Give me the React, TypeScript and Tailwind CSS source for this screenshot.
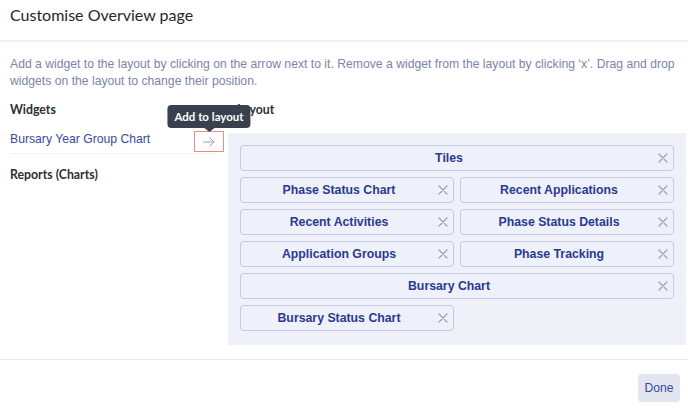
import React from "react";

const X = () => (
  <svg width="10" height="10" viewBox="0 0 10 10" className="absolute right-[5px] top-1/2 -translate-y-1/2">
    <path d="M1 1L9 9M9 1L1 9" stroke="#9aa0b4" strokeWidth="1.2" strokeLinecap="round" />
  </svg>
);

const Box = ({ label, full }: { label: string; full?: boolean }) => (
  <div
    className={`relative h-[26px] rounded-[4px] border border-[#c3c9e6] bg-[#eef1f9] flex items-center justify-center pl-[4px] pr-[20px] text-[12.3px] font-bold text-[#2b3990] ${full ? "col-span-2" : ""}`}
    style={{ fontFamily: '"Liberation Sans", Arial, sans-serif' }}
  >
    {label}
    <X />
  </div>
);

export default function App() {
  const sans = { fontFamily: 'Lato, "Noto Sans", sans-serif' };
  const arial = { fontFamily: '"Liberation Sans", Arial, sans-serif' };
  return (
    <div className="w-[688px] h-[414px] bg-white overflow-hidden flex flex-col">
      <div className="h-[42px] border-b-2 border-[#eef0f4] px-[10px] pt-[5px]">
        <div className="text-[16px] leading-[20px] text-[#23272e]" style={sans}>
          Customise Overview page
        </div>
      </div>
      <div className="px-[10px] pt-[14px]">
        <p className="text-[12.2px] leading-[17px] text-[#7c84a8] pr-[2px]" style={arial}>
          Add a widget to the layout by clicking on the arrow next to it. Remove a widget from the layout by clicking ‘x’. Drag and drop widgets on the layout to change their position.
        </p>
        <div className="flex mt-[10px]">
          <div className="w-[206px] shrink-0">
            <div className="text-[12.3px] leading-[20px] font-bold text-[#2b2f36]" style={sans}>
              Widgets
            </div>
            <div className="relative mt-[5px] h-[29px] border-b border-[#eef0f4] flex items-start justify-between">
              <span className="text-[12.2px] leading-[20px] mt-[4px] text-[#3a4a9e]" style={arial}>
                Bursary Year Group Chart
              </span>
              <div className="relative -mr-[8px] mt-[6px] w-[30px] h-[21px] border border-[#f08a8a] flex items-center justify-center">
                <svg width="12" height="10" viewBox="0 0 12 10">
                  <path d="M0.5 5H11M7 1L11 5L7 9" fill="none" stroke="#9aa0b4" strokeWidth="1" strokeLinecap="round" strokeLinejoin="round" />
                </svg>
                <div className="absolute left-1/2 -translate-x-1/2 bottom-full z-10 flex flex-col items-center">
                  <div className="bg-[#3a414e] rounded-[4px] px-[7px] h-[23px] flex items-center whitespace-nowrap text-white text-[11.5px] font-bold" style={sans}>
                    Add to layout
                  </div>
                  <div className="w-0 h-0 border-l-[5px] border-r-[5px] border-t-[4px] border-l-transparent border-r-transparent border-t-[#3a414e]" />
                </div>
              </div>
            </div>
            <div className="mt-[11px] text-[12.3px] leading-[20px] font-bold text-[#2b2f36]" style={sans}>
              Reports (Charts)
            </div>
          </div>
          <div className="ml-[12px] flex-1 -mr-[8px]">
            <div className="pl-[9px] text-[12.3px] leading-[20px] font-bold text-[#2b2f36]" style={sans}>
              Layout
            </div>
            <div className="mt-[13px] bg-[#eef1f8] pt-[12px] pl-[12px] pr-[12px] pb-[14px] grid grid-cols-2 gap-[6px]">
              <Box label="Tiles" full />
              <Box label="Phase Status Chart" />
              <Box label="Recent Applications" />
              <Box label="Recent Activities" />
              <Box label="Phase Status Details" />
              <Box label="Application Groups" />
              <Box label="Phase Tracking" />
              <Box label="Bursary Chart" full />
              <Box label="Bursary Status Chart" />
            </div>
          </div>
        </div>
      </div>
      <div className="mt-[14px] border-t border-[#e8eaef] flex justify-end pr-[8px] pt-[14px]">
        <button className="w-[42px] h-[28px] rounded-[4px] bg-[#e3e6ef] text-[12.2px] text-[#3a4a9e]" style={arial}>
          Done
        </button>
      </div>
    </div>
  );
}
